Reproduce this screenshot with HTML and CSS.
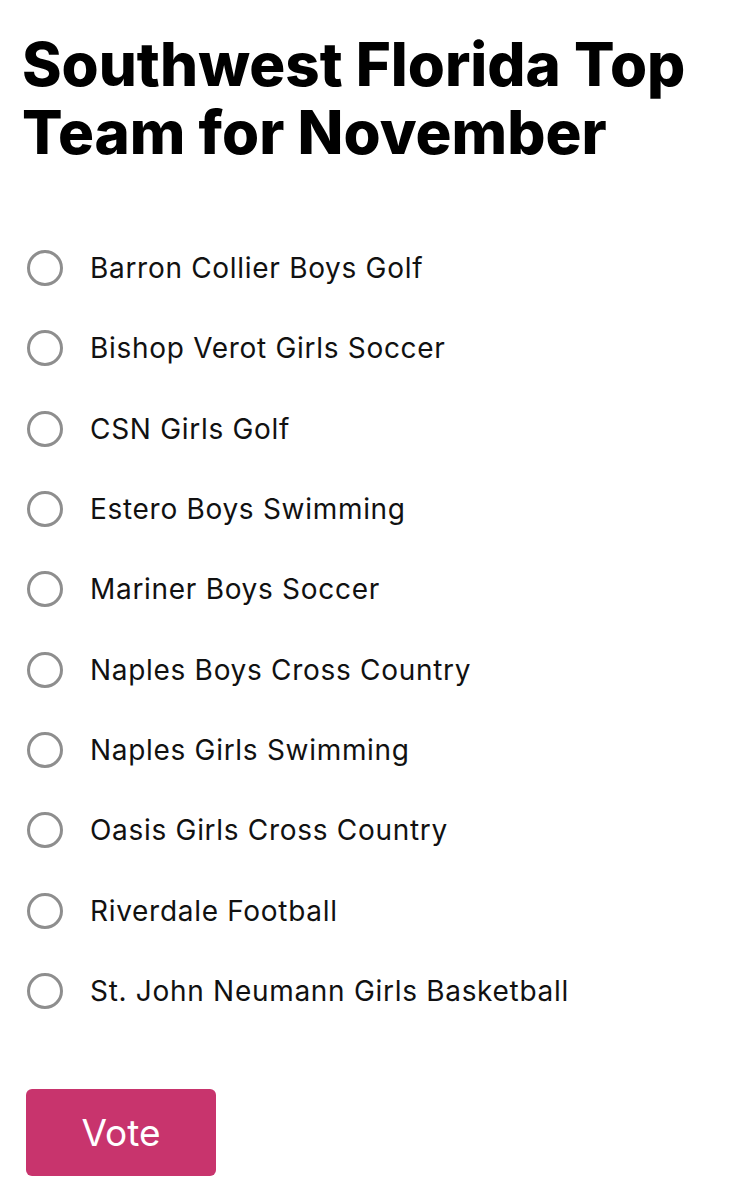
FILE: index.html
```html
<!DOCTYPE html>
<html>
<head>
<meta charset="UTF-8">
<title>Top Team Poll</title>
<link rel="stylesheet" href="styles.css">
</head>
<body>
<form class="poll" action="javascript:void(0)">
  <h1 class="poll-title">Southwest Florida Top Team for November</h1>
  <ul class="poll-options">
    <li><label class="option"><input type="radio" name="team"><span class="option-text">Barron Collier Boys Golf</span></label></li>
    <li><label class="option"><input type="radio" name="team"><span class="option-text">Bishop Verot Girls Soccer</span></label></li>
    <li><label class="option"><input type="radio" name="team"><span class="option-text">CSN Girls Golf</span></label></li>
    <li><label class="option"><input type="radio" name="team"><span class="option-text">Estero Boys Swimming</span></label></li>
    <li><label class="option"><input type="radio" name="team"><span class="option-text">Mariner Boys Soccer</span></label></li>
    <li><label class="option"><input type="radio" name="team"><span class="option-text">Naples Boys Cross Country</span></label></li>
    <li><label class="option"><input type="radio" name="team"><span class="option-text">Naples Girls Swimming</span></label></li>
    <li><label class="option"><input type="radio" name="team"><span class="option-text">Oasis Girls Cross Country</span></label></li>
    <li><label class="option"><input type="radio" name="team"><span class="option-text">Riverdale Football</span></label></li>
    <li><label class="option"><input type="radio" name="team"><span class="option-text">St. John Neumann Girls Basketball</span></label></li>
  </ul>
  <button class="vote-btn" type="submit">Vote</button>
</form>
</body>
</html>
```

FILE: styles.css
```css
body{
    margin: 0;
    background: #fff;
    font-family: Inter, "Noto Sans", sans-serif;
    color: #111;
}
.poll{
    padding: 30px 22px 0 26px;
}
.poll-title{
    margin: 0 0 0 -4px;
    font-size: 60px;
    line-height: 68px;
    font-weight: 800;
    letter-spacing: 0;
    color: #000;
}
.poll-options{
    list-style: none;
    margin: 62px 0 0;
    padding: 0;
}
.option{
    display: flex;
    align-items: center;
    height: 80.3px;
    cursor: pointer;
}
.option input{
    appearance: none;
    margin: 0 27px 0 1px;
    width: 36px;
    height: 36px;
    border: 3px solid #8e8e8e;
    border-radius: 50%;
    box-sizing: border-box;
}
.option-text{
    font-size: 28px;
    font-weight: 400;
    letter-spacing: 0.7px;
}
.vote-btn{
    margin-top: 58px;
    width: 190px;
    height: 87px;
    border: 0;
    border-radius: 6px;
    background: #c8346d;
    color: #fff;
    font-family: Inter, "Noto Sans", sans-serif;
    font-size: 37px;
}
```
